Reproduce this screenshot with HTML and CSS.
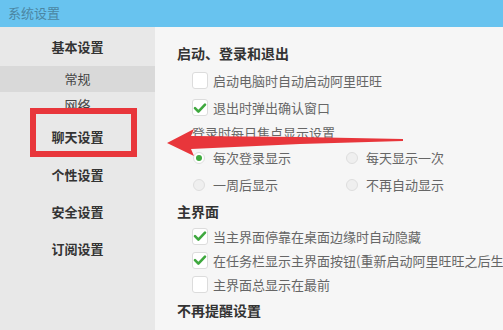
FILE: index.html
```html
<!DOCTYPE html>
<html lang="zh-CN">
<head>
    <meta charset="UTF-8">
    <meta name="viewport" content="width=device-width, initial-scale=1.0">
    <title>系统设置</title>

    <link rel="stylesheet" href="styles.css">
</head>
<body>
    <div class="titlebar">系统设置</div>

    <div class="main">
        <div class="sidebar">
            <div class="nav-group">基本设置</div>
            <div class="nav-sub active">常规</div>
            <div class="nav-sub">网络</div>
            <div class="nav-group chat">聊天设置</div>
            <div class="nav-group">个性设置</div>
            <div class="nav-group">安全设置</div>
            <div class="nav-group">订阅设置</div>
        </div>

        <div class="content">
            <div class="section-title">启动、登录和退出</div>
            <div class="row">
                <span class="checkbox"></span>
                <span>启动电脑时自动启动阿里旺旺</span>
            </div>
            <div class="row">
                <span class="checkbox checked">
                    <svg width="14" height="14" viewBox="0 0 14 14"><path d="M2 7.2 L5.4 10.6 L12 3.6" fill="none" stroke="#3ea83e" stroke-width="2.6" stroke-linecap="round" stroke-linejoin="round"/></svg>
                </span>
                <span>退出时弹出确认窗口</span>
            </div>
            <div class="sub-label">登录时每日焦点显示设置</div>
            <div class="radio-row">
                <div class="radio-item"><span class="radio selected"></span>每次登录显示</div>
                <div class="radio-item"><span class="radio"></span>每天显示一次</div>
            </div>
            <div class="radio-row">
                <div class="radio-item"><span class="radio"></span>一周后显示</div>
                <div class="radio-item"><span class="radio"></span>不再自动显示</div>
            </div>

            <div class="section-title second">主界面</div>
            <div class="row tight">
                <span class="checkbox checked">
                    <svg width="14" height="14" viewBox="0 0 14 14"><path d="M2 7.2 L5.4 10.6 L12 3.6" fill="none" stroke="#3ea83e" stroke-width="2.6" stroke-linecap="round" stroke-linejoin="round"/></svg>
                </span>
                <span>当主界面停靠在桌面边缘时自动隐藏</span>
            </div>
            <div class="row tight">
                <span class="checkbox checked">
                    <svg width="14" height="14" viewBox="0 0 14 14"><path d="M2 7.2 L5.4 10.6 L12 3.6" fill="none" stroke="#3ea83e" stroke-width="2.6" stroke-linecap="round" stroke-linejoin="round"/></svg>
                </span>
                <span>在任务栏显示主界面按钮(重新启动阿里旺旺之后生效)</span>
            </div>
            <div class="row tight">
                <span class="checkbox"></span>
                <span>主界面总显示在最前</span>
            </div>

            <div class="section-title">不再提醒设置</div>
            <div class="sub-label">显示的提醒、不再提醒的设置</div>
        </div>
    </div>

    <!-- red annotation on top of the screenshot -->
    <div class="mark-box"></div>
    <svg class="mark-arrow" width="503" height="330" viewBox="0 0 503 330">
        <polygon points="167,143 194,129 191,136 300,137 403,139 403,141 300,144 191,149 194,156" fill="#e8363b"/>
    </svg>
</body>
</html>
```

FILE: styles.css
```css
* {
    margin: 0px;
    padding: 0px;
    box-sizing: border-box;
}

body {
    width: 503px;
    height: 330px;
    overflow: hidden;
    position: relative;
    font-family: "Noto Sans CJK SC", "Microsoft YaHei", sans-serif;
    font-size: 13px;
    background-color: #f6f6f6;
}

.titlebar {
    height: 27px;
    line-height: 25px;
    padding-left: 8px;
    background-color: #68c3ef;
    color: #4b86a3;
    font-size: 13px;
}

.main {
    display: flex;
    height: 303px;
}

.sidebar {
    width: 155px;
    flex-shrink: 0;
    background-color: #e8e8e8;
    text-align: center;
}

.nav-group {
    height: 37px;
    line-height: 37px;
    font-weight: bold;
    color: #333;
}

.nav-group:first-child {
    height: 39px;
    line-height: 39px;
}

.nav-group.chat {
    height: 38px;
    line-height: 38px;
}

.nav-sub {
    height: 26px;
    line-height: 26px;
    color: #444;
}

.nav-sub.active {
    background-color: #d9d9d9;
}

.content {
    flex: 1;
    padding-top: 12px;
    padding-left: 22px;
    white-space: nowrap;
    overflow: hidden;
    color: #666;
}

.section-title {
    height: 28px;
    line-height: 28px;
    font-size: 14px;
    font-weight: bold;
    color: #333;
}

.section-title.second {
    height: 26px;
    line-height: 26px;
}

.row {
    display: flex;
    align-items: center;
    gap: 5px;
    height: 27px;
    padding-left: 15px;
}

.row.tight {
    height: 24px;
}

.checkbox {
    width: 16px;
    height: 17px;
    border: 1px solid #dcdcdc;
    border-radius: 3px;
    background-color: #fff;
    display: flex;
    justify-content: center;
    align-items: center;
    flex-shrink: 0;
}

.sub-label {
    height: 23px;
    line-height: 23px;
    padding-left: 15px;
}

.radio-row {
    display: flex;
    height: 27px;
    padding-left: 16px;
}

.radio-item {
    width: 153px;
    display: flex;
    align-items: center;
    gap: 8px;
}

.radio {
    width: 12px;
    height: 12px;
    border-radius: 50%;
    border: 1px solid #dedede;
    background-color: #efefef;
    position: relative;
}

.radio.selected {
    background-color: #fff;
}

.radio.selected::after {
    content: "";
    position: absolute;
    left: 2px;
    top: 2px;
    width: 6px;
    height: 6px;
    border-radius: 50%;
    background-color: #3eab3e;
}

.mark-box {
    position: absolute;
    left: 30px;
    top: 108px;
    width: 107px;
    height: 49px;
    border: 6px solid #e8363b;
}

.mark-arrow {
    position: absolute;
    left: 0;
    top: 0;
    pointer-events: none;
}
```
